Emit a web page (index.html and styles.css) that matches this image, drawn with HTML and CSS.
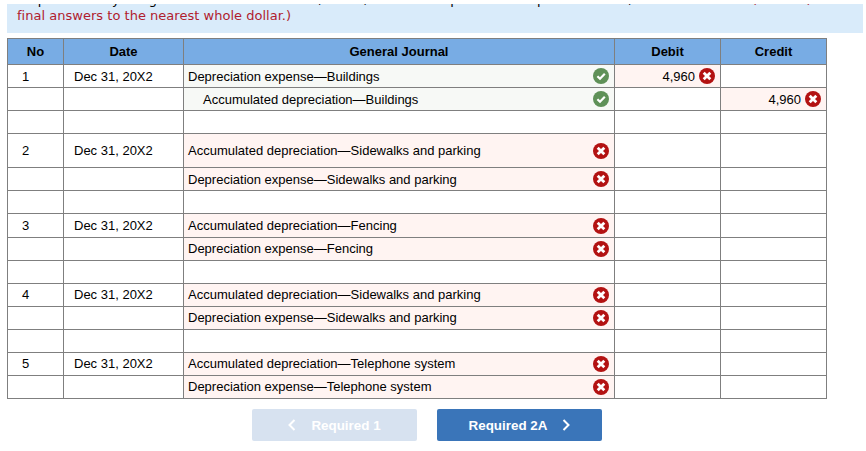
FILE: index.html
```html
<!doctype html>
<html lang="en">
  <head>
    <meta charset="UTF-8" />
    <meta name="viewport" content="width=device-width, initial-scale=1.0" />
    <title>Journal entry worksheet</title>
    <link rel="stylesheet" href="styles.css">
  </head>

  <body>
    <svg class="defs" width="0" height="0">
      <symbol id="icon-ok" viewBox="0 0 16 16">
        <circle cx="8" cy="8" r="8" fill="#5f9158" />
        <path d="M4.4 8.2 7 10.8 11.8 5.8" fill="none" stroke="#fff" stroke-width="2.2" />
      </symbol>
      <symbol id="icon-bad" viewBox="0 0 16 16">
        <circle cx="8" cy="8" r="8" fill="#b31212" />
        <path d="M4.7 4.7 11.3 11.3M11.3 4.7 4.7 11.3" fill="none" stroke="#fff" stroke-width="2.8" />
      </symbol>
    </svg>

    <div class="notice">
      <p class="notice-cut">     p                y       g                                       ,          ,                    p                   p                    ,<span class="notice-red">                             (            )</span></p>
      <p class="notice-text">final answers to the nearest whole dollar.)</p>
    </div>

    <table class="journal">
      <colgroup>
        <col class="col-no" />
        <col class="col-date" />
        <col class="col-account" />
        <col class="col-money" />
        <col class="col-money" />
      </colgroup>
      <thead>
        <tr>
          <th>No</th>
          <th>Date</th>
          <th>General Journal</th>
          <th>Debit</th>
          <th>Credit</th>
        </tr>
      </thead>
      <tbody>
        <tr>
          <td class="no">1</td>
          <td class="date">Dec 31, 20X2</td>
          <td class="account right"><span class="cell-row">Depreciation expense—Buildings<svg class="icon"><use href="#icon-ok" /></svg></span></td>
          <td class="money wrong"><span class="cell-end">4,960<svg class="icon"><use href="#icon-bad" /></svg></span></td>
          <td></td>
        </tr>
        <tr>
          <td></td>
          <td></td>
          <td class="account right"><span class="cell-row indent">Accumulated depreciation—Buildings<svg class="icon"><use href="#icon-ok" /></svg></span></td>
          <td></td>
          <td class="money wrong"><span class="cell-end">4,960<svg class="icon"><use href="#icon-bad" /></svg></span></td>
        </tr>
        <tr><td></td><td></td><td></td><td></td><td></td></tr>

        <tr class="tall">
          <td class="no">2</td>
          <td class="date">Dec 31, 20X2</td>
          <td class="account wrong"><span class="cell-row">Accumulated depreciation—Sidewalks and parking<svg class="icon"><use href="#icon-bad" /></svg></span></td>
          <td></td>
          <td></td>
        </tr>
        <tr>
          <td></td>
          <td></td>
          <td class="account wrong"><span class="cell-row">Depreciation expense—Sidewalks and parking<svg class="icon"><use href="#icon-bad" /></svg></span></td>
          <td></td>
          <td></td>
        </tr>
        <tr><td></td><td></td><td></td><td></td><td></td></tr>

        <tr class="plus-one">
          <td class="no">3</td>
          <td class="date">Dec 31, 20X2</td>
          <td class="account wrong"><span class="cell-row">Accumulated depreciation—Fencing<svg class="icon"><use href="#icon-bad" /></svg></span></td>
          <td></td>
          <td></td>
        </tr>
        <tr class="lift">
          <td></td>
          <td></td>
          <td class="account wrong"><span class="cell-row">Depreciation expense—Fencing<svg class="icon"><use href="#icon-bad" /></svg></span></td>
          <td></td>
          <td></td>
        </tr>
        <tr><td></td><td></td><td></td><td></td><td></td></tr>

        <tr class="lift">
          <td class="no">4</td>
          <td class="date">Dec 31, 20X2</td>
          <td class="account wrong"><span class="cell-row">Accumulated depreciation—Sidewalks and parking<svg class="icon"><use href="#icon-bad" /></svg></span></td>
          <td></td>
          <td></td>
        </tr>
        <tr class="lift">
          <td></td>
          <td></td>
          <td class="account wrong"><span class="cell-row">Depreciation expense—Sidewalks and parking<svg class="icon"><use href="#icon-bad" /></svg></span></td>
          <td></td>
          <td></td>
        </tr>
        <tr><td></td><td></td><td></td><td></td><td></td></tr>

        <tr class="lift">
          <td class="no">5</td>
          <td class="date">Dec 31, 20X2</td>
          <td class="account wrong"><span class="cell-row">Accumulated depreciation—Telephone system<svg class="icon"><use href="#icon-bad" /></svg></span></td>
          <td></td>
          <td></td>
        </tr>
        <tr class="lift">
          <td></td>
          <td></td>
          <td class="account wrong"><span class="cell-row">Depreciation expense—Telephone system<svg class="icon"><use href="#icon-bad" /></svg></span></td>
          <td></td>
          <td></td>
        </tr>
      </tbody>
    </table>

    <div class="pager">
      <a class="btn btn-off">
        <svg class="chev" viewBox="0 0 8 12"><path d="M6.5 1 1.5 6 6.5 11" /></svg>
        Required 1
      </a>
      <a class="btn">
        Required 2A
        <svg class="chev" viewBox="0 0 8 12"><path d="M1.5 1 6.5 6 1.5 11" /></svg>
      </a>
    </div>
  </body>
</html>
```

FILE: styles.css
```css
* {
  box-sizing: border-box;
}

body {
  margin: 0;
  padding: 4px 3px 0 7px;
  background-color: #fff;
  font-family: "Liberation Sans", Arial, sans-serif;
  font-size: 13px;
  color: #000;
}

.defs {
  position: absolute;
}

.notice {
  height: 29px;
  padding-left: 10px;
  overflow: hidden;
  background-color: #d9ebfa;
  font-family: "DejaVu Sans", sans-serif;
  font-size: 13px;
}

/* last line of the paragraph above, only its descenders stay visible */
.notice-cut {
  height: 14px;
  margin: -12px 0 0;
  line-height: 16px;
  white-space: pre;
}

.notice-red {
  color: #b01c2e;
}

.notice-text {
  margin: 0;
  line-height: 20px;
  letter-spacing: 0.02px;
  color: #b01c2e;
}

.journal {
  width: 820px;
  margin-top: 5px;
  border-collapse: collapse;
  table-layout: fixed;
}

.col-no {
  width: 56px;
}

.col-date {
  width: 120px;
}

.col-account {
  width: 431px;
}

.col-money {
  width: 106px;
}

.journal th,
.journal td {
  height: 23px;
  padding: 0;
  border: 1px solid #7f7f7f;
  font-weight: normal;
}

.journal th {
  height: 26px;
  padding-bottom: 1px;
  background-color: #78ace4;
  text-align: center;
  font-weight: bold;
}

.journal .tall td {
  height: 34px;
}

.journal .plus-one td {
  height: 24px;
}

.journal .lift td {
  padding-bottom: 1px;
}

.journal .no {
  padding-left: 14px;
}

.journal .date {
  padding-left: 10px;
}

.right {
  background-color: #f7f9f6;
}

.wrong {
  background-color: #fff4f2;
}

.cell-row {
  display: flex;
  align-items: center;
  justify-content: space-between;
  padding: 0 5px 0 4px;
}

.cell-row.indent {
  padding-left: 19px;
}

.cell-end {
  display: flex;
  align-items: center;
  justify-content: flex-end;
  gap: 4px;
  padding-right: 5px;
}

.icon {
  flex: none;
  width: 16px;
  height: 16px;
}

.pager {
  display: flex;
  gap: 20px;
  margin-top: 10px;
  padding-left: 245px;
}

.btn {
  display: flex;
  align-items: center;
  justify-content: center;
  gap: 15px;
  width: 165px;
  height: 32px;
  border-radius: 2px;
  background-color: #3a75b9;
  color: #fff;
  font-size: 13.4px;
  font-weight: bold;
}

.btn-off {
  background-color: #d7e2f0;
}

.chev {
  width: 8px;
  height: 12px;
  fill: none;
  stroke: #fff;
  stroke-width: 2;
}
```
